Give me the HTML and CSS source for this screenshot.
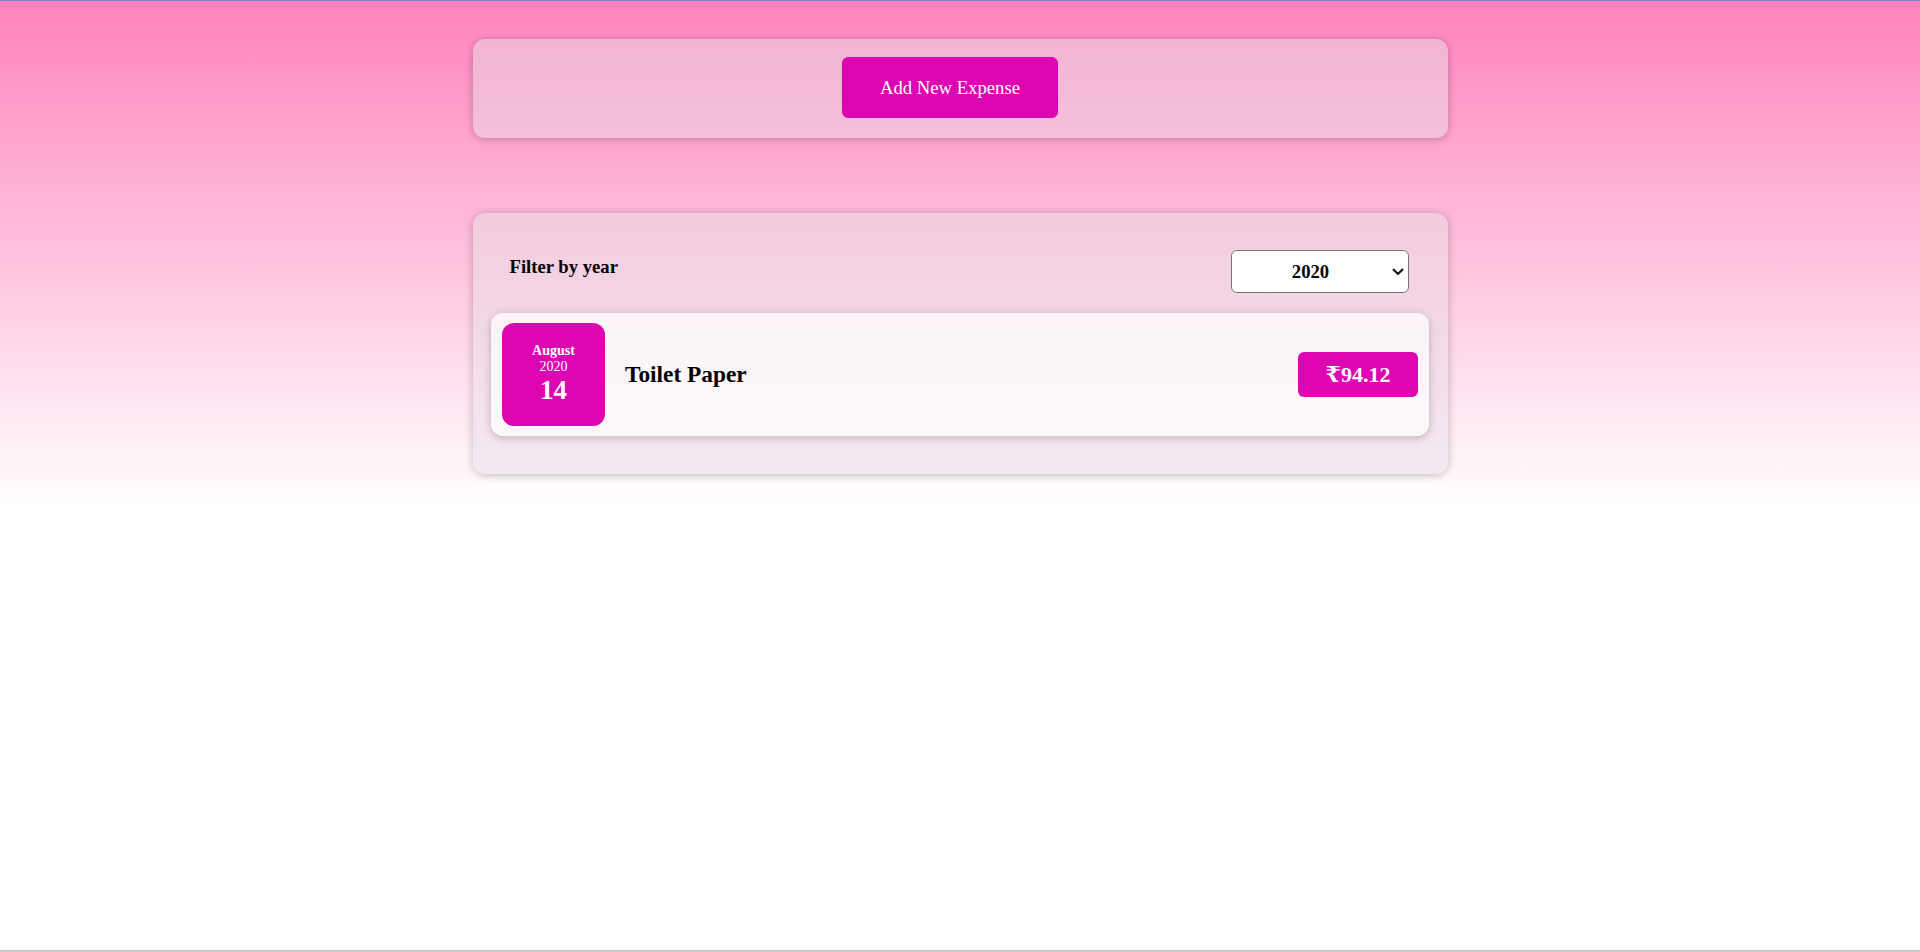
FILE: index.html
```html
<!DOCTYPE html>
<html lang="en">
<head>
<meta charset="utf-8">
<title>Expenses</title>
<link rel="stylesheet" href="styles.css">
</head>
<body>
<div class="page">
  <div class="hero">
    <div class="new-expense">
      <button class="add-btn" type="button">Add New Expense</button>
    </div>
    <div class="expenses">
      <div class="filter">
        <label class="filter-label">Filter by year</label>
        <div class="select-wrap">
          <select class="filter-select">
            <option>2022</option>
            <option>2021</option>
            <option selected>2020</option>
            <option>2019</option>
          </select>
          <svg class="select-arrow" width="12" height="8" viewBox="0 0 12 8" aria-hidden="true">
            <path d="M1.5 1.5 L6 6 L10.5 1.5" fill="none" stroke="#111" stroke-width="2" stroke-linecap="round" stroke-linejoin="round"/>
          </svg>
        </div>
      </div>
      <div class="expense-item">
        <div class="expense-date">
          <div class="date-month">August</div>
          <div class="date-year">2020</div>
          <div class="date-day">14</div>
        </div>
        <h2 class="expense-title">Toilet Paper</h2>
        <div class="expense-price">₹94.12</div>
      </div>
    </div>
  </div>
  <div class="bottom-line"></div>
</div>
</body>
</html>
```

FILE: styles.css
```css
* { box-sizing: border-box; }
html, body { margin: 0; padding: 0; }
body {
  font-family: "Liberation Serif", "Times New Roman", "DejaVu Serif", serif;
  background: #ffffff;
  color: #000;
}
.page {
  min-height: 100vh;
  display: flex;
  flex-direction: column;
}
.hero {
  border-top: 1px solid #8a7ccf;
  background: linear-gradient(180deg, #ff83bb 0%, #ffffff 505px);
  padding-top: 38px;
  padding-bottom: 30px;
}
.new-expense {
  width: 975px;
  margin: 0 auto;
  padding: 18px 0 20px;
  text-align: center;
  border-radius: 12px;
  background: rgba(232, 220, 229, 0.5);
  box-shadow: 0 1px 8px rgba(0, 0, 0, 0.25);
}
.add-btn {
  font-family: "Liberation Serif", "Times New Roman", serif;
  font-size: 18.67px;
  line-height: 21px;
  color: #ffffff;
  background: #dd05b2;
  border: 1px solid #dd05b2;
  border-radius: 6px;
  padding: 19px 37.5px;
  margin-right: 20px;
  cursor: pointer;
}
.expenses {
  width: 975px;
  margin: 75px auto 0;
  padding: 19px 18.5px 38px;
  border-radius: 12px;
  background: rgba(232, 222, 230, 0.5);
  box-shadow: 0 1px 8px rgba(0, 0, 0, 0.25);
}
.filter {
  display: flex;
  align-items: center;
  justify-content: space-between;
  padding: 0 20.5px 0 18.5px;
  margin: 18px 0 20px;
}
.filter-label {
  font-weight: bold;
  font-size: 18.67px;
  margin-bottom: 9px;
}
.select-wrap {
  position: relative;
  display: flex;
}
.filter-select {
  -webkit-appearance: none;
  appearance: none;
  width: 178px;
  height: 43px;
  font-family: "Liberation Serif", "Times New Roman", serif;
  font-size: 18.67px;
  font-weight: bold;
  text-align: center;
  text-align-last: center;
  color: #000;
  background: #ffffff;
  border: 1px solid #767676;
  border-radius: 6px;
  padding: 0 22px 0 4px;
}
.select-arrow {
  position: absolute;
  right: 5px;
  top: 18px;
  pointer-events: none;
}
.expense-item {
  display: flex;
  align-items: center;
  padding: 10px 11px;
  border-radius: 12px;
  background: rgba(255, 255, 255, 0.72);
  box-shadow: 0 2px 8px rgba(0, 0, 0, 0.22);
}
.expense-date {
  width: 103px;
  height: 103px;
  flex: none;
  border-radius: 12px;
  background: #dd05b2;
  color: #ffffff;
  display: flex;
  flex-direction: column;
  align-items: center;
  justify-content: center;
}
.date-month { font-size: 14px; font-weight: bold; }
.date-year { font-size: 14px; }
.date-day { font-size: 27px; font-weight: bold; }
.expense-title {
  flex: 1;
  margin: 0 0 0 20px;
  font-size: 23.33px;
  font-weight: bold;
}
.expense-price {
  width: 120px;
  height: 45px;
  display: flex;
  align-items: center;
  justify-content: center;
  border-radius: 6px;
  background: #dd05b2;
  color: #ffffff;
  font-family: "Liberation Serif", "DejaVu Serif", serif;
  font-size: 22px;
  font-weight: bold;
}
.bottom-line {
  margin-top: auto;
  height: 2px;
  background: linear-gradient(180deg, #bdbdbd, #d6d6d6);
}
```
